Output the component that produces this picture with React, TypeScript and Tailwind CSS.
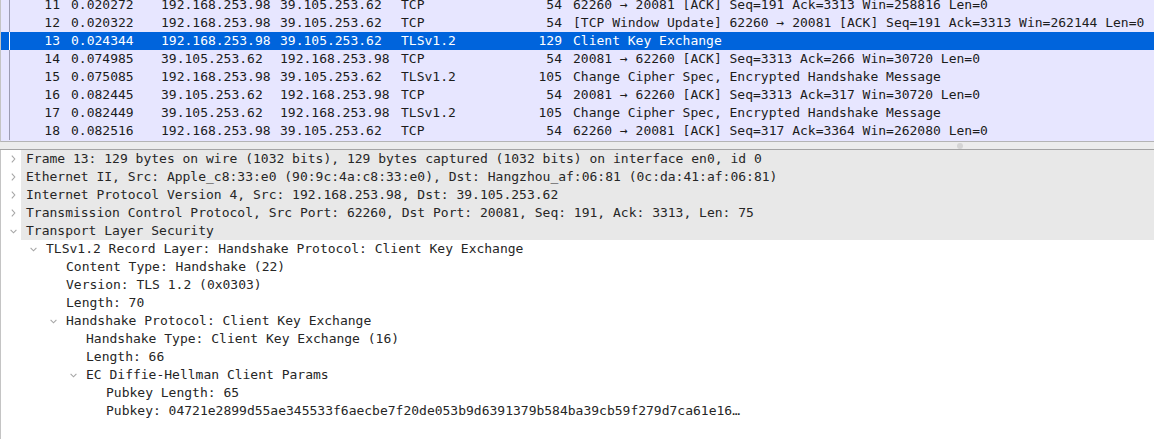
import React from "react";

type Packet = {
  no: number;
  time: string;
  src: string;
  dst: string;
  proto: string;
  len: number;
  info: string;
};

const packets: Packet[] = [
  { no: 11, time: "0.020272", src: "192.168.253.98", dst: "39.105.253.62", proto: "TCP", len: 54, info: "62260 → 20081 [ACK] Seq=191 Ack=3313 Win=258816 Len=0" },
  { no: 12, time: "0.020322", src: "192.168.253.98", dst: "39.105.253.62", proto: "TCP", len: 54, info: "[TCP Window Update] 62260 → 20081 [ACK] Seq=191 Ack=3313 Win=262144 Len=0" },
  { no: 13, time: "0.024344", src: "192.168.253.98", dst: "39.105.253.62", proto: "TLSv1.2", len: 129, info: "Client Key Exchange" },
  { no: 14, time: "0.074985", src: "39.105.253.62", dst: "192.168.253.98", proto: "TCP", len: 54, info: "20081 → 62260 [ACK] Seq=3313 Ack=266 Win=30720 Len=0" },
  { no: 15, time: "0.075085", src: "192.168.253.98", dst: "39.105.253.62", proto: "TLSv1.2", len: 105, info: "Change Cipher Spec, Encrypted Handshake Message" },
  { no: 16, time: "0.082445", src: "39.105.253.62", dst: "192.168.253.98", proto: "TCP", len: 54, info: "20081 → 62260 [ACK] Seq=3313 Ack=317 Win=30720 Len=0" },
  { no: 17, time: "0.082449", src: "39.105.253.62", dst: "192.168.253.98", proto: "TLSv1.2", len: 105, info: "Change Cipher Spec, Encrypted Handshake Message" },
  { no: 18, time: "0.082516", src: "192.168.253.98", dst: "39.105.253.62", proto: "TCP", len: 54, info: "62260 → 20081 [ACK] Seq=317 Ack=3364 Win=262080 Len=0" },
];

type Node = { level: number; text: string; toggle?: "open" | "closed" };

const tree: Node[] = [
  { level: 0, toggle: "closed", text: "Frame 13: 129 bytes on wire (1032 bits), 129 bytes captured (1032 bits) on interface en0, id 0" },
  { level: 0, toggle: "closed", text: "Ethernet II, Src: Apple_c8:33:e0 (90:9c:4a:c8:33:e0), Dst: Hangzhou_af:06:81 (0c:da:41:af:06:81)" },
  { level: 0, toggle: "closed", text: "Internet Protocol Version 4, Src: 192.168.253.98, Dst: 39.105.253.62" },
  { level: 0, toggle: "closed", text: "Transmission Control Protocol, Src Port: 62260, Dst Port: 20081, Seq: 191, Ack: 3313, Len: 75" },
  { level: 0, toggle: "open", text: "Transport Layer Security" },
  { level: 1, toggle: "open", text: "TLSv1.2 Record Layer: Handshake Protocol: Client Key Exchange" },
  { level: 2, text: "Content Type: Handshake (22)" },
  { level: 2, text: "Version: TLS 1.2 (0x0303)" },
  { level: 2, text: "Length: 70" },
  { level: 2, toggle: "open", text: "Handshake Protocol: Client Key Exchange" },
  { level: 3, text: "Handshake Type: Client Key Exchange (16)" },
  { level: 3, text: "Length: 66" },
  { level: 3, toggle: "open", text: "EC Diffie-Hellman Client Params" },
  { level: 4, text: "Pubkey Length: 65" },
  { level: 4, text: "Pubkey: 04721e2899d55ae345533f6aecbe7f20de053b9d6391379b584ba39cb59f279d7ca61e16…" },
];

function Chevron({ open }: { open: boolean }) {
  return open ? (
    <svg width="7" height="5" viewBox="0 0 7 5" className="ml-[9px]">
      <path d="M0.6 0.8 L3.5 3.8 L6.4 0.8" fill="none" stroke="#a6a6a6" strokeWidth="1.1" />
    </svg>
  ) : (
    <svg width="5" height="8" viewBox="0 0 5 8" className="ml-[10px]">
      <path d="M0.8 0.6 L3.8 4 L0.8 7.4" fill="none" stroke="#a6a6a6" strokeWidth="1.1" />
    </svg>
  );
}

export default function App() {
  return (
    <div className="w-[1154px] h-[439px] overflow-hidden bg-white text-[13px] leading-[18px] font-['DejaVu_Sans_Mono',monospace]">
      {/* Packet list */}
      <div className="h-[142px] overflow-hidden bg-[#e7e6ff] border-l border-[#c4c4c4] border-b border-b-[#b4b4b4]">
        <div className="-mt-[4px]">
          {packets.map((p) => {
            const sel = p.no === 13;
            return (
              <div
                key={p.no}
                className={`flex h-[18px] items-center whitespace-pre ${
                  sel ? "bg-[#0064dc] text-white" : "text-[#1c1c1c]"
                }`}
              >
                <div className={`w-[9px] h-full shrink-0 border-r ${sel ? "border-white" : "border-[#9c9cb4]"}`} />
                <div className="w-[50px] shrink-0 text-right">{p.no}</div>
                <div className="w-[101px] shrink-0 pl-[11px]">{p.time}</div>
                <div className="w-[119px] shrink-0">{p.src}</div>
                <div className="w-[121px] shrink-0">{p.dst}</div>
                <div className="w-[100px] shrink-0">{p.proto}</div>
                <div className="w-[61px] shrink-0 text-right">{p.len}</div>
                <div className="pl-[11px]">{p.info}</div>
              </div>
            );
          })}
        </div>
      </div>

      {/* Splitter */}
      <div className="h-[8px] bg-[#ececec] border-b border-[#a4a4a4] flex items-center">
        <div className="ml-[957px] w-[6px] h-[6px] rounded-full bg-[#d4d4d4]" />
      </div>

      {/* Packet details */}
      <div className="h-[289px] border-l border-[#c4c4c4] text-[#262626]">
        {tree.map((n, i) => (
          <div key={i} className="flex h-[18px] items-center whitespace-pre">
            <div className="h-full shrink-0" style={{ width: n.level * 20 }} />
            <div className="w-[20px] h-full shrink-0 flex items-center">
              {n.toggle && <Chevron open={n.toggle === "open"} />}
            </div>
            <div className={`flex-1 h-full pl-[5px] ${n.level === 0 ? "bg-[#e8e8e8]" : ""}`}>{n.text}</div>
          </div>
        ))}
      </div>
    </div>
  );
}
